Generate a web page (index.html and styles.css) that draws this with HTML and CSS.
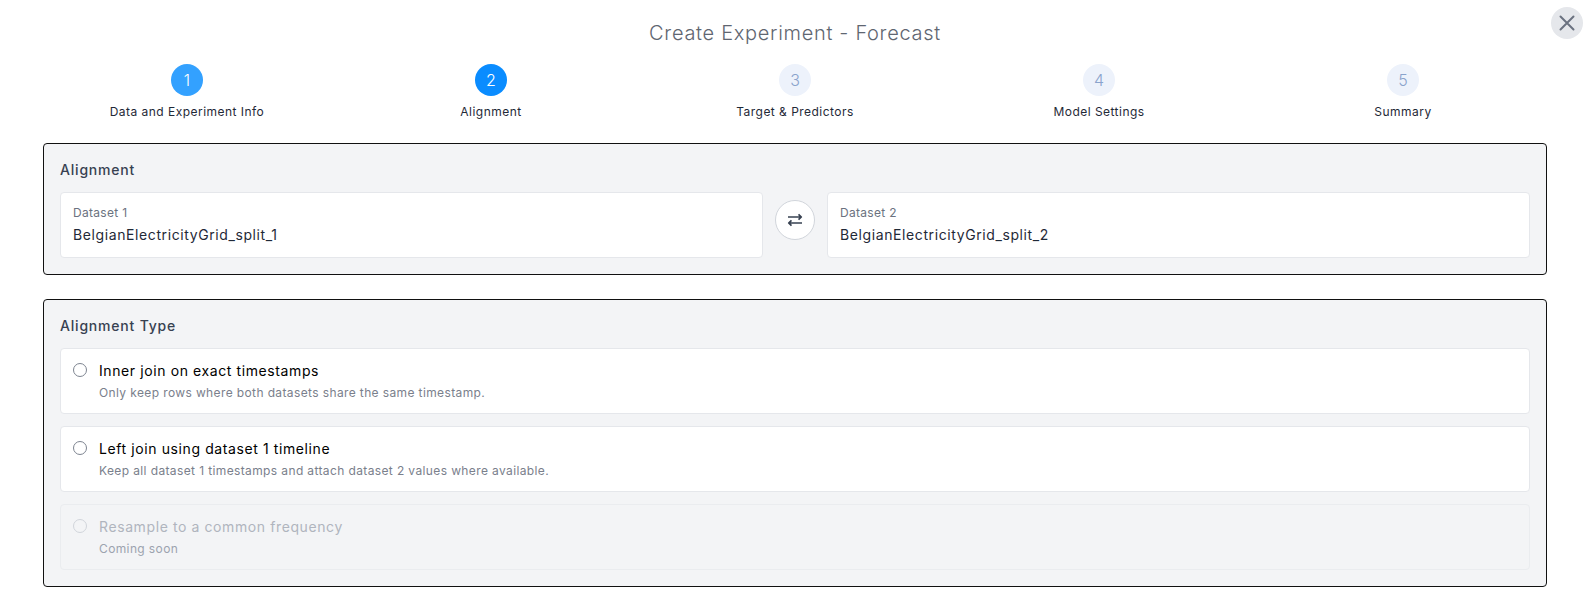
FILE: index.html
```html
<!DOCTYPE html>
<html lang="en">
<head>
    <meta charset="UTF-8">
    <meta name="viewport" content="width=device-width, initial-scale=1.0">
    <title>Create Experiment - Forecast</title>
    <link rel="stylesheet" href="styles.css">
</head>
<body>
    <div class="modal">
        <button class="close-btn" aria-label="Close">
            <svg width="18" height="18" viewBox="0 0 18 18" fill="none" stroke="#6b7280" stroke-width="2" stroke-linecap="round"><path d="M2.5 2.5l13 13M15.5 2.5l-13 13"/></svg>
        </button>
        <h1 class="title">Create Experiment - Forecast</h1>
        <div class="steps">
            <div class="step"><span class="step-num done">1</span><span class="step-label">Data and Experiment Info</span></div>
            <div class="step"><span class="step-num active">2</span><span class="step-label">Alignment</span></div>
            <div class="step"><span class="step-num">3</span><span class="step-label">Target &amp; Predictors</span></div>
            <div class="step"><span class="step-num">4</span><span class="step-label">Model Settings</span></div>
            <div class="step"><span class="step-num">5</span><span class="step-label">Summary</span></div>
        </div>
        <section class="panel panel-datasets">
            <h2>Alignment</h2>
            <div class="datasets">
                <div class="dataset">
                    <div class="dataset-label">Dataset 1</div>
                    <div class="dataset-name">BelgianElectricityGrid_split_1</div>
                </div>
                <button class="swap-btn" aria-label="Swap datasets">
                    <svg width="16" height="16" viewBox="0 0 16 16" fill="none" stroke="#374151" stroke-width="1.7" stroke-linejoin="round"><path d="M1 5h13M11.5 2.3l2.8 2.7-2.8 2.7M15 11H2M4.5 8.3L1.7 11l2.8 2.7"/></svg>
                </button>
                <div class="dataset">
                    <div class="dataset-label">Dataset 2</div>
                    <div class="dataset-name">BelgianElectricityGrid_split_2</div>
                </div>
            </div>
        </section>
        <section class="panel">
            <h2>Alignment Type</h2>
            <div class="options">
                <label class="option">
                    <input type="radio" name="alignment">
                    <span>
                        <span class="option-title">Inner join on exact timestamps</span>
                        <span class="option-sub">Only keep rows where both datasets share the same timestamp.</span>
                    </span>
                </label>
                <label class="option">
                    <input type="radio" name="alignment">
                    <span>
                        <span class="option-title">Left join using dataset 1 timeline</span>
                        <span class="option-sub">Keep all dataset 1 timestamps and attach dataset 2 values where available.</span>
                    </span>
                </label>
                <label class="option disabled">
                    <input type="radio" name="alignment" disabled>
                    <span>
                        <span class="option-title">Resample to a common frequency</span>
                        <span class="option-sub">Coming soon</span>
                    </span>
                </label>
            </div>
        </section>
    </div>
</body>
</html>
```

FILE: styles.css
```css
* {
    box-sizing: border-box;
}

body {
    margin: 0;
    background-color: #fff;
    font-family: "Inter", "Open Sans", sans-serif;
    color: #1f2937;
}

.modal {
    position: relative;
    padding: 19px 35px 5px;
}

.close-btn {
    position: absolute;
    top: 7px;
    right: 7px;
    width: 32px;
    height: 32px;
    display: flex;
    align-items: center;
    justify-content: center;
    padding: 0;
    border: none;
    border-radius: 50%;
    background-color: #e5e7eb;
}

.title {
    margin: 0;
    height: 28px;
    font-size: 20px;
    line-height: 28px;
    font-weight: 300;
    letter-spacing: 0.69px;
    color: #5f6671;
    text-align: center;
}

.steps {
    display: grid;
    grid-template-columns: repeat(5, 1fr);
    margin-top: 17px;
}

.step {
    display: flex;
    flex-direction: column;
    align-items: center;
}

.step-num {
    width: 32px;
    height: 32px;
    display: flex;
    align-items: center;
    justify-content: center;
    border-radius: 50%;
    background-color: #edf2fb;
    color: #8aa3cc;
    font-size: 16px;
    font-weight: 300;
}

.step-num.done {
    background-color: #33a1ff;
    color: #fff;
}

.step-num.active {
    background-color: #0a8cff;
    color: #fff;
}

.step-label {
    margin-top: 8px;
    font-size: 12px;
    line-height: 16px;
    letter-spacing: 0.47px;
    color: #1f2937;
}

.panel {
    margin: 24px 8px 0;
    padding: 16px;
    border: 1px solid #111;
    border-radius: 4px;
    background-color: #f3f4f6;
}

.panel-datasets {
    margin-top: 23px;
}

.panel h2 {
    margin: 0 0 12px;
    font-size: 14px;
    line-height: 20px;
    font-weight: 500;
    letter-spacing: 0.8px;
    color: #374151;
}

.datasets {
    display: flex;
    gap: 12px;
}

.dataset {
    flex: 1;
    height: 66px;
    padding: 12px;
    border: 1px solid #e5e7eb;
    border-radius: 4px;
    background-color: #fff;
}

.dataset-label {
    font-size: 12px;
    line-height: 16px;
    letter-spacing: 0.3px;
    color: #6b7280;
}

.dataset-name {
    margin-top: 4px;
    font-size: 14px;
    line-height: 20px;
    letter-spacing: 0.6px;
    color: #1f2937;
}

.swap-btn {
    width: 40px;
    height: 40px;
    margin-top: 8px;
    display: flex;
    align-items: center;
    justify-content: center;
    padding: 0;
    border: 1px solid #d1d5db;
    border-radius: 50%;
    background-color: #fff;
}

.options {
    display: flex;
    flex-direction: column;
    gap: 12px;
}

.option {
    display: flex;
    align-items: flex-start;
    gap: 12px;
    height: 66px;
    padding: 12px;
    border: 1px solid #e5e7eb;
    border-radius: 4px;
    background-color: #fff;
}

.option input {
    appearance: none;
    flex: none;
    width: 14px;
    height: 14px;
    margin: 2px 0 0;
    border: 1px solid #7d8490;
    border-radius: 50%;
    background-color: #fff;
}

.option-title {
    display: block;
    font-size: 14px;
    line-height: 20px;
    font-weight: 400;
    letter-spacing: 0.6px;
    color: #000;
}

.option-sub {
    display: block;
    margin-top: 4px;
    font-size: 12px;
    line-height: 16px;
    letter-spacing: 0.38px;
    color: #7a808c;
}

.option.disabled {
    border-color: #eaecef;
    background-color: #f3f4f6;
}

.option.disabled input {
    border-color: #d1d5db;
    background-color: #f3f4f6;
}

.option.disabled .option-title {
    color: #b0b5be;
}

.option.disabled .option-sub {
    color: #9ca3af;
}
```
